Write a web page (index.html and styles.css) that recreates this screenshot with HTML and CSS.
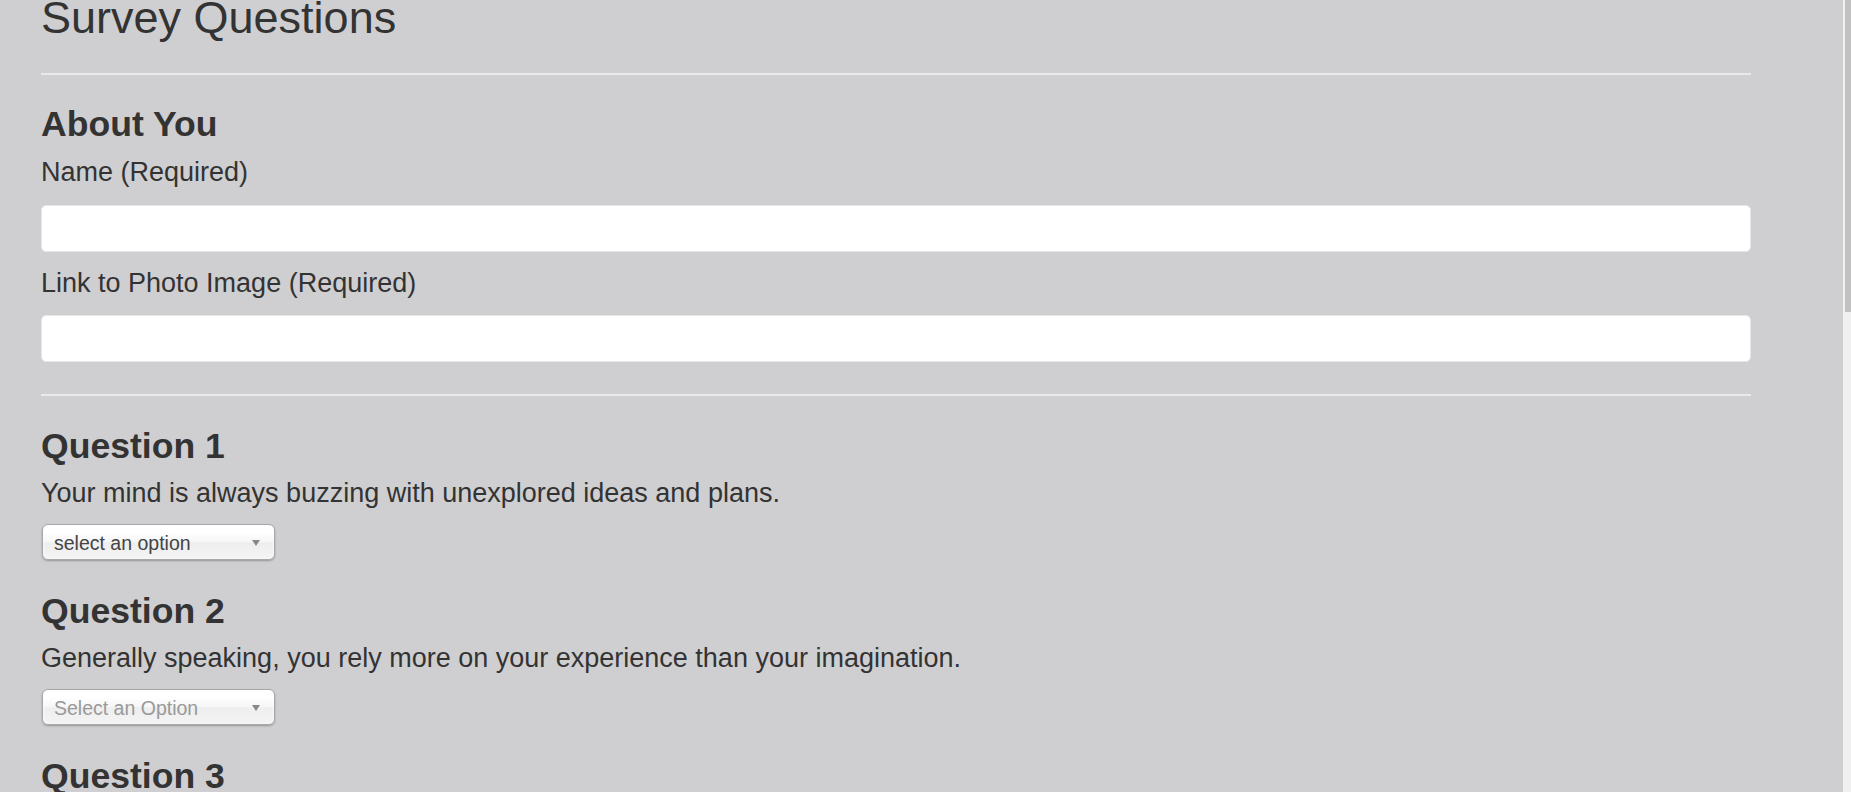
FILE: index.html
```html
<!DOCTYPE html>
<html lang="en">
<head>
<meta charset="utf-8">
<title>Survey Questions</title>
<link rel="stylesheet" href="styles.css">
</head>
<body>
<div class="page">
  <main class="content">
    <h1 class="title">Survey Questions</h1>
    <hr class="rule">
    <section class="about">
      <h2 class="heading">About You</h2>
      <label class="field-label" for="name">Name (Required)</label>
      <input class="text-input" id="name" type="text">
      <label class="field-label" for="photo">Link to Photo Image (Required)</label>
      <input class="text-input" id="photo" type="text">
    </section>
    <hr class="rule rule-lower">
    <section class="question">
      <h2 class="heading">Question 1</h2>
      <p class="question-text">Your mind is always buzzing with unexplored ideas and plans.</p>
      <div class="select"><span class="select-value">select an option</span><span class="select-arrow"></span></div>
    </section>
    <section class="question">
      <h2 class="heading">Question 2</h2>
      <p class="question-text">Generally speaking, you rely more on your experience than your imagination.</p>
      <div class="select"><span class="select-value placeholder">Select an Option</span><span class="select-arrow"></span></div>
    </section>
    <section class="question">
      <h2 class="heading">Question 3</h2>
    </section>
  </main>
  <div class="scrollbar"><div class="scrollbar-thumb"></div></div>
</div>
</body>
</html>
```

FILE: styles.css
```css
html, body {
  margin: 0;
  height: 100%;
  overflow: hidden;
}

body {
  background: #cfcfd1;
  color: #333;
  font-family: "Liberation Sans", Arial, sans-serif;
}

.page {
  display: flex;
  height: 792px;
}

.content {
  flex: 1;
  padding: 0 92px 0 41px;
  min-width: 0;
}

.title {
  margin: 0;
  font-size: 45px;
  line-height: 36px;
  font-weight: 400;
}

.rule {
  margin: 37px 0 0;
  border: 0;
  height: 2px;
  background: #e9e9e9;
}

.rule-lower {
  margin-top: 32px;
}

.heading {
  margin: 29px 0 0;
  font-size: 35.6px;
  line-height: 40px;
  font-weight: 700;
}

.field-label {
  display: block;
  margin-top: 12px;
  font-size: 27px;
  line-height: 32px;
}

.field-label + .text-input + .field-label {
  margin-top: 15px;
}

.text-input {
  display: block;
  width: 100%;
  box-sizing: border-box;
  height: 47px;
  margin: 17px 0 0;
  border: 1px solid #e6e6e6;
  border-radius: 5px;
  background: #fff;
  padding: 0 12px;
  font: inherit;
}

.field-label + .text-input + .field-label + .text-input {
  margin-top: 16px;
}

.question {
  margin-top: 30px;
}

.question + .question {
  margin-top: 31px;
}

.question .heading {
  margin-top: 0;
}

.question-text {
  margin: 11px 0 0;
  font-size: 27px;
  line-height: 32px;
}

.select {
  display: flex;
  align-items: center;
  justify-content: space-between;
  box-sizing: border-box;
  width: 233px;
  height: 36px;
  margin: 15px 0 0 1px;
  padding: 2px 14px 0 11px;
  border: 1px solid #a8a8a8;
  border-radius: 6px;
  background: linear-gradient(#fff 20%, #f6f6f6 50%, #eee 52%, #f4f4f4 100%);
  box-shadow: 0 0 3px #fff inset, 0 1px 2px rgba(0, 0, 0, 0.28);
}

.select-value {
  font-size: 19.5px;
  line-height: 22px;
  color: #444;
}

.select-value.placeholder {
  color: #999;
}

.select-arrow {
  width: 0;
  height: 0;
  border-left: 4px solid transparent;
  border-right: 4px solid transparent;
  border-top: 6px solid #888;
}

.scrollbar {
  width: 8px;
  flex: none;
  background: #f0f0f0;
  display: flex;
  align-items: flex-start;
  justify-content: flex-end;
}

.scrollbar-thumb {
  width: 6px;
  height: 312px;
  background: #c1c1c1;
}
```
